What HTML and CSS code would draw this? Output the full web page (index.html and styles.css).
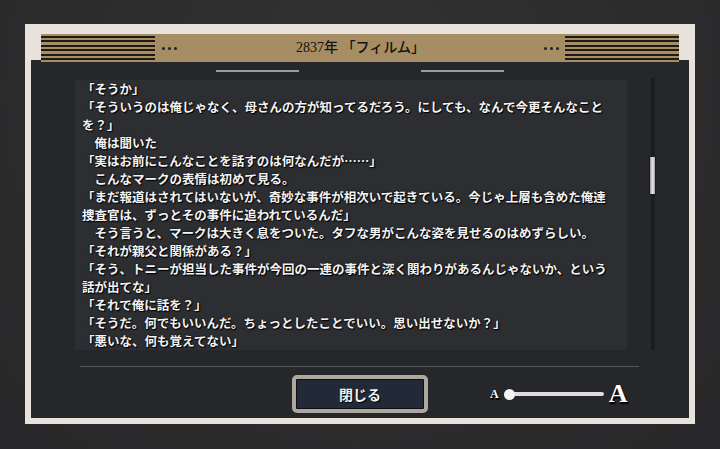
FILE: index.html
```html
<!DOCTYPE html>
<html lang="ja">
<head>
<meta charset="utf-8">
<title>2837年 「フィルム」</title>
<link rel="stylesheet" href="styles.css">
</head>
<body>
<div class="frame">
  <div class="header">
    <div class="stripes"></div>
    <div class="dots dots-left"><i></i><i></i><i></i></div>
    <h1 class="title">2837年 「フィルム」</h1>
    <div class="dots dots-right"><i></i><i></i><i></i></div>
    <div class="stripes"></div>
  </div>
  <div class="panel">
    <div class="tabs"><span class="tab"></span><span class="tab"></span></div>
    <div class="main">
      <div class="text">
        <p>「そうか」</p>
        <p>「そういうのは俺じゃなく、母さんの方が知ってるだろう。にしても、なんで今更そんなことを？」</p>
        <p>　俺は聞いた</p>
        <p>「実はお前にこんなことを話すのは何なんだが……」</p>
        <p>　こんなマークの表情は初めて見る。</p>
        <p>「まだ報道はされてはいないが、奇妙な事件が相次いで起きている。今じゃ上層も含めた俺達捜査官は、ずっとその事件に追われているんだ」</p>
        <p>　そう言うと、マークは大きく息をついた。タフな男がこんな姿を見せるのはめずらしい。</p>
        <p>「それが親父と関係がある？」</p>
        <p>「そう、トニーが担当した事件が今回の一連の事件と深く関わりがあるんじゃないか、という話が出てな」</p>
        <p>「それで俺に話を？」</p>
        <p>「そうだ。何でもいいんだ。ちょっとしたことでいい。思い出せないか？」</p>
        <p>「悪いな、何も覚えてない」</p>
      </div>
      <div class="scroll"><div class="thumb"></div></div>
    </div>
    <div class="divider"></div>
    <div class="controls">
      <button class="close">閉じる</button>
      <div class="slider">
        <span class="a-small">A</span>
        <span class="track"><span class="knob"></span></span>
        <span class="a-large">A</span>
      </div>
    </div>
  </div>
</div>
</body>
</html>
```
FILE: styles.css
```css
html, body {
  margin: 0;
  height: 100%;
}
body {
  background: radial-gradient(ellipse at 50% 20%, #323233 0%, #2c2c2d 55%, #28282a 100%);
  display: flex;
  justify-content: center;
  padding-top: 24px;
  box-sizing: border-box;
  font-family: "Noto Sans CJK JP", sans-serif;
}
.frame {
  width: 670px;
  height: 400px;
  box-sizing: border-box;
  padding: 10px 6px 6px;
  background: #e7e3dc;
  display: flex;
  flex-direction: column;
}
.header {
  position: relative;
  height: 28px;
  margin: 0 10px -2px;
  background: #a78d63;
  display: flex;
  align-items: center;
}
.stripes {
  width: 114px;
  height: 24px;
  background: repeating-linear-gradient(to bottom, #1e1b17 0 2px, transparent 2px 4.4px);
}
.dots {
  display: flex;
  gap: 3px;
  margin-top: 1px;
}
.dots i {
  width: 3px;
  height: 3px;
  border-radius: 50%;
  background: #231f1a;
}
.dots-left { margin-left: 7px; }
.dots-right { margin-right: 6px; }
.title {
  flex: 1;
  margin: 0;
  text-align: center;
  font-family: "Liberation Serif", "Noto Sans CJK JP", serif;
  font-weight: 500;
  font-size: 14px;
  line-height: 28px;
  color: #15120e;
}
.panel {
  flex: 1;
  background: #26272b;
  display: flex;
  flex-direction: column;
}
.tabs {
  display: flex;
  justify-content: center;
  gap: 122px;
  margin-top: 10px;
}
.tab {
  width: 83px;
  height: 2px;
  background: #9c9c9c;
}
.main {
  display: flex;
  align-items: flex-start;
  margin-top: 6px;
  height: 272px;
}
.text {
  margin: 2px 0 0 44px;
  width: 552px;
  height: 270px;
  box-sizing: border-box;
  padding: 0 19px 0 7px;
  overflow: hidden;
  background: #2d2e32;
  color: #f3f3f3;
  font-size: 12.5px;
  font-weight: 700;
  line-height: 18px;
  text-shadow: 1px 1px 1px #000, 0 0 2px #000;
}
.text p {
  margin: 0;
}
.scroll {
  margin-left: 22px;
  width: 7px;
  height: 272px;
  background: linear-gradient(to right, transparent 1.5px, #1b1c1f 1.5px 5.5px, transparent 5.5px);
}
.thumb {
  margin-top: 78px;
  height: 39px;
  box-sizing: border-box;
  border: 1px solid #18191b;
  border-radius: 1px;
  background: linear-gradient(to right, #9d9d9d, #e2e2e2 50%, #a8a8a8);
}
.divider {
  margin: 16px 0 0 49px;
  width: 559px;
  height: 1px;
  background: #55565b;
}
.controls {
  margin-top: 8px;
  display: grid;
  grid-template-columns: 1fr auto 1fr;
  align-items: center;
}
.close {
  grid-column: 2;
  width: 136px;
  height: 38px;
  box-sizing: border-box;
  border: 4px solid #aca89e;
  border-radius: 5px;
  background: #222a37;
  box-shadow: inset 0 0 0 1px #0d1016;
  color: #f2f2f2;
  font-family: "Noto Sans CJK JP", sans-serif;
  font-size: 14px;
  font-weight: 700;
  text-shadow: 1px 1px 1px #000;
  padding: 0;
}
.slider {
  grid-column: 3;
  justify-self: start;
  margin-left: 62px;
  display: flex;
  align-items: center;
  color: #fff;
  font-family: "Liberation Serif", serif;
  font-weight: 700;
  text-shadow: 1px 1px 1px #000, 1px 2px 1px #000;
}
.a-small {
  font-size: 12px;
  line-height: 1;
}
.track {
  position: relative;
  margin-left: 7px;
  width: 98px;
  height: 4px;
  border-radius: 2px;
  background: #dcdcdc;
}
.knob {
  position: absolute;
  left: -2px;
  top: -3.5px;
  width: 11px;
  height: 11px;
  border-radius: 50%;
  background: #f4f4f4;
}
.a-large {
  margin-left: 5px;
  font-size: 26px;
  line-height: 1;
}
```
